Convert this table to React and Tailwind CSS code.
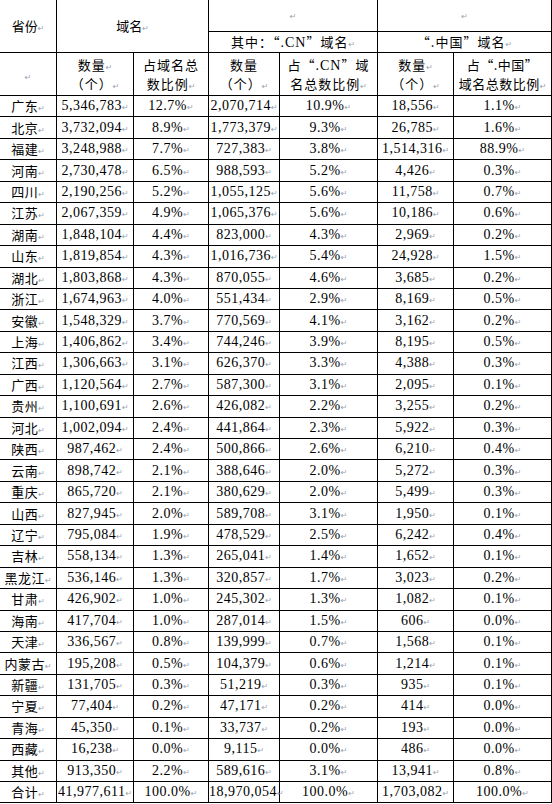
const rows = [
  ["广东", "5,346,783", "12.7%", "2,070,714", "10.9%", "18,556", "1.1%"],
  ["北京", "3,732,094", "8.9%", "1,773,379", "9.3%", "26,785", "1.6%"],
  ["福建", "3,248,988", "7.7%", "727,383", "3.8%", "1,514,316", "88.9%"],
  ["河南", "2,730,478", "6.5%", "988,593", "5.2%", "4,426", "0.3%"],
  ["四川", "2,190,256", "5.2%", "1,055,125", "5.6%", "11,758", "0.7%"],
  ["江苏", "2,067,359", "4.9%", "1,065,376", "5.6%", "10,186", "0.6%"],
  ["湖南", "1,848,104", "4.4%", "823,000", "4.3%", "2,969", "0.2%"],
  ["山东", "1,819,854", "4.3%", "1,016,736", "5.4%", "24,928", "1.5%"],
  ["湖北", "1,803,868", "4.3%", "870,055", "4.6%", "3,685", "0.2%"],
  ["浙江", "1,674,963", "4.0%", "551,434", "2.9%", "8,169", "0.5%"],
  ["安徽", "1,548,329", "3.7%", "770,569", "4.1%", "3,162", "0.2%"],
  ["上海", "1,406,862", "3.4%", "744,246", "3.9%", "8,195", "0.5%"],
  ["江西", "1,306,663", "3.1%", "626,370", "3.3%", "4,388", "0.3%"],
  ["广西", "1,120,564", "2.7%", "587,300", "3.1%", "2,095", "0.1%"],
  ["贵州", "1,100,691", "2.6%", "426,082", "2.2%", "3,255", "0.2%"],
  ["河北", "1,002,094", "2.4%", "441,864", "2.3%", "5,922", "0.3%"],
  ["陕西", "987,462", "2.4%", "500,866", "2.6%", "6,210", "0.4%"],
  ["云南", "898,742", "2.1%", "388,646", "2.0%", "5,272", "0.3%"],
  ["重庆", "865,720", "2.1%", "380,629", "2.0%", "5,499", "0.3%"],
  ["山西", "827,945", "2.0%", "589,708", "3.1%", "1,950", "0.1%"],
  ["辽宁", "795,084", "1.9%", "478,529", "2.5%", "6,242", "0.4%"],
  ["吉林", "558,134", "1.3%", "265,041", "1.4%", "1,652", "0.1%"],
  ["黑龙江", "536,146", "1.3%", "320,857", "1.7%", "3,023", "0.2%"],
  ["甘肃", "426,902", "1.0%", "245,302", "1.3%", "1,082", "0.1%"],
  ["海南", "417,704", "1.0%", "287,014", "1.5%", "606", "0.0%"],
  ["天津", "336,567", "0.8%", "139,999", "0.7%", "1,568", "0.1%"],
  ["内蒙古", "195,208", "0.5%", "104,379", "0.6%", "1,214", "0.1%"],
  ["新疆", "131,705", "0.3%", "51,219", "0.3%", "935", "0.1%"],
  ["宁夏", "77,404", "0.2%", "47,171", "0.2%", "414", "0.0%"],
  ["青海", "45,350", "0.1%", "33,737", "0.2%", "193", "0.0%"],
  ["西藏", "16,238", "0.0%", "9,115", "0.0%", "486", "0.0%"],
  ["其他", "913,350", "2.2%", "589,616", "3.1%", "13,941", "0.8%"],
  ["合计", "41,977,611", "100.0%", "18,970,054", "100.0%", "1,703,082", "100.0%"],
];

// word paragraph mark
function Mark() {
  return (
    <span className="text-[8px] leading-none tracking-normal text-gray-400 [font-family:'DejaVu_Sans',sans-serif]">
      ↵
    </span>
  );
}

function Latin({ children }) {
  return (
    <span className="[font-family:'Liberation_Serif',serif] text-[14px] leading-none">{children}</span>
  );
}

const td = "border border-black p-0 text-center align-middle whitespace-nowrap overflow-visible";
const cjk = " text-[13px] [font-family:'Noto_Sans_CJK_SC','Liberation_Serif',sans-serif]";

export default function App() {
  return (
    <div className="w-[552px] h-[804px] overflow-hidden bg-white">
      <table className="table-fixed border-collapse w-[552px] -ml-px -mt-px text-black text-[14px] leading-[16px] [font-family:'Liberation_Serif','Noto_Sans_CJK_SC',serif]">
        <colgroup>
          <col className="w-[57px]" />
          <col className="w-[77px]" />
          <col className="w-[75px]" />
          <col className="w-[71px]" />
          <col className="w-[98px]" />
          <col className="w-[76px]" />
          <col className="w-[98px]" />
        </colgroup>
        <tbody>
          <tr className="h-[32px]">
            <td rowSpan={2} className={td + cjk}>
              省份<Mark />
            </td>
            <td rowSpan={2} colSpan={2} className={td + cjk}>
              域名<Mark />
            </td>
            <td colSpan={2} className={td + " align-top pt-[7px]"}>
              <Mark />
            </td>
            <td colSpan={2} className={td + " align-top pt-[7px]"}>
              <Mark />
            </td>
          </tr>
          <tr className="h-[21px]">
            <td colSpan={2} className={td + cjk + " tracking-[1px]"}>
              其中：“<Latin>.CN</Latin>”域名<Mark />
            </td>
            <td colSpan={2} className={td + cjk + " tracking-[1px]"}>
              “.中国”域名<Mark />
            </td>
          </tr>
          <tr className="h-[43px] leading-[19px]">
            <td className={td + cjk}>
              <Mark />
            </td>
            <td className={td + cjk + " tracking-[1px]"}>
              <div>数量<Mark /></div>
              <div>（个）<Mark /></div>
            </td>
            <td className={td + cjk + " tracking-[1px]"}>
              <div>占域名总</div>
              <div>数比例<Mark /></div>
            </td>
            <td className={td + cjk + " tracking-[1px]"}>
              <div>数量</div>
              <div>（个）<Mark /></div>
            </td>
            <td className={td + cjk + " tracking-[1px]"}>
              <div>占“<Latin>.CN</Latin>”域</div>
              <div>名总数比例<Mark /></div>
            </td>
            <td className={td + cjk + " tracking-[1px]"}>
              <div>数量<Mark /></div>
              <div>（个）<Mark /></div>
            </td>
            <td className={td + cjk + " tracking-[0.5px]"}>
              <div>占“.中国”</div>
              <div>域名总数比例<Mark /></div>
            </td>
          </tr>
          {rows.map((r) => (
            <tr key={r[0]} className="h-[21.45px]">
              {r.map((c, i) => (
                <td
                  key={i}
                  className={td + (i === 0 ? cjk + " tracking-[0.5px]" : " tracking-[0.5px]")}
                >
                  {c}
                  <Mark />
                </td>
              ))}
            </tr>
          ))}
        </tbody>
      </table>
    </div>
  );
}
